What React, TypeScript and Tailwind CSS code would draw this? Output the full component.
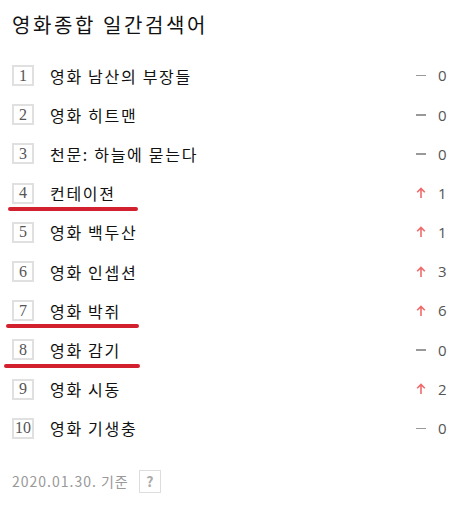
import React from 'react';

interface Rank {
  rank: number;
  title: string;
  change: number;
  mark?: { left: number; width: number };
}

const ranks: Rank[] = [
  { rank: 1, title: '영화 남산의 부장들', change: 0 },
  { rank: 2, title: '영화 히트맨', change: 0 },
  { rank: 3, title: '천문: 하늘에 묻는다', change: 0 },
  { rank: 4, title: '컨테이젼', change: 1, mark: { left: 8, width: 130 } },
  { rank: 5, title: '영화 백두산', change: 1 },
  { rank: 6, title: '영화 인셉션', change: 3 },
  { rank: 7, title: '영화 박쥐', change: 6, mark: { left: 6, width: 133 } },
  { rank: 8, title: '영화 감기', change: 0, mark: { left: 4, width: 136 } },
  { rank: 9, title: '영화 시동', change: 2 },
  { rank: 10, title: '영화 기생충', change: 0 },
];

const kr = { fontFamily: '"Noto Sans CJK KR", "Noto Sans", sans-serif' };

function UpArrow() {
  return (
    <svg width="10" height="12" viewBox="0 0 10 12" fill="none">
      <path d="M5 11V1.5M1.2 5.2L5 1.4l3.8 3.8" stroke="#ef6b6b" strokeWidth="1.6" />
    </svg>
  );
}

export default function App() {
  return (
    <div className="w-[470px] h-[520px] bg-white px-3" style={kr}>
      <h1 className="h-[56px] pt-[8px] text-[20px] leading-[34px] text-[#111] tracking-[2.6px]">영화종합 일간검색어</h1>

      <ul>
        {ranks.map((r) => (
          <li key={r.rank} className="relative flex items-center h-[39.2px]">
            <span
              className="w-[22px] h-[21px] border-2 border-[#e0e0e0] flex items-center justify-center text-[16px] text-[#555] leading-none"
              style={{ fontFamily: '"Liberation Serif", serif' }}
            >
              {r.rank}
            </span>
            <span className="ml-[16px] flex-1 text-[16px] text-[#111] tracking-[1.7px]">{r.title}</span>
            <span className="w-[22px] flex justify-center">
              {r.change > 0 ? <UpArrow /> : <span className="block w-[10px] h-[1.5px] bg-[#999]" />}
            </span>
            <span
              className="w-[16px] ml-[6px] mr-[4px] text-[15px] text-[#555]"
              style={{ fontFamily: '"Open Sans", sans-serif' }}
            >
              {r.change}
            </span>
            {r.mark && (
              <span
                className="absolute bottom-[2px] h-[4px] rounded-full bg-[#d3202f]"
                style={{ left: r.mark.left - 12, width: r.mark.width }}
              />
            )}
          </li>
        ))}
      </ul>

      <div className="mt-[22px] flex items-center gap-[10px]">
        <span className="text-[14px] text-[#999] tracking-[1px]">2020.01.30. 기준</span>
        <span className="w-[22px] h-[23px] border border-[#ddd] flex items-center justify-center text-[14px] font-bold text-[#aaa]">
          ?
        </span>
      </div>
    </div>
  );
}
